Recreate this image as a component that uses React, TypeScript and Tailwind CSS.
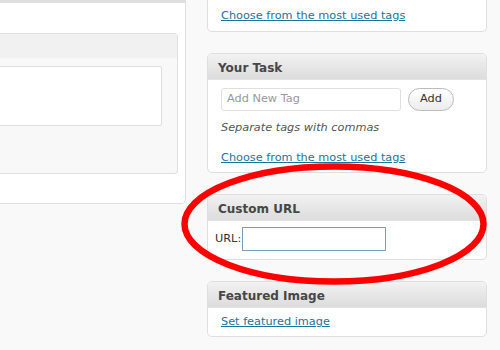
const font = { fontFamily: '"DejaVu Sans", Verdana, sans-serif' }

function Box({ title, children, className = "" }: { title: string; children: React.ReactNode; className?: string }) {
  return (
    <div className={"rounded-[5px] border border-[#dfdfdf] bg-white overflow-hidden " + className}>
      <div className="h-[26px] border-b border-[#e3e3e3] bg-linear-to-b from-[#f2f2f2] to-[#dcdcdc] pl-[10px] pt-[5px] text-[12px] font-bold text-[#464646]">
        {title}
      </div>
      {children}
    </div>
  )
}

export default function App() {
  return (
    <div className="relative h-[350px] w-[500px] overflow-hidden bg-[#f9f9f9]" style={font}>
      <div className="flex gap-[21px]">
        {/* left editor column */}
        <div className="h-[204px] w-[186px] rounded-br-[5px] border-r border-b border-[#dfdfdf] bg-white">
          <div className="h-[3px] bg-[#dfdfdf]" />
          <div className="mt-[30px] h-[141px] w-[178px] rounded-r-[4px] border border-l-0 border-[#dfdfdf] bg-[#f8f8f8]">
            <div className="h-[24px] bg-[#f1f1f1]" />
            <div className="mt-[8px] h-[60px] w-[162px] rounded-r-[3px] border border-l-0 border-[#dfdfdf] bg-white" />
          </div>
        </div>

        {/* sidebar */}
        <div className="flex w-[280px] flex-col gap-[21px] text-[11.3px] text-[#333]">
          <div className="h-[32px] rounded-b-[5px] border border-t-0 border-[#dfdfdf] bg-white pl-[13px] pt-[8px]">
            <a className="text-[#21759b] underline">Choose from the most used tags</a>
          </div>

          <Box title="Your Task" className="h-[120px]">
            <div className="px-[13px] pt-[8px]">
              <div className="flex items-center gap-[7px]">
                <div className="flex h-[23px] w-[180px] items-center rounded-[3px] border border-[#dfdfdf] pl-[5px] text-[#999]">
                  Add New Tag
                </div>
                <button className="h-[23px] w-[46px] rounded-full border border-[#bbb] bg-linear-to-b from-white to-[#ececec] text-[#333]">
                  Add
                </button>
              </div>
              <div className="mt-[9px] italic text-[#555]">Separate tags with commas</div>
              <div className="mt-[13px]">
                <a className="text-[#21759b] underline">Choose from the most used tags</a>
              </div>
            </div>
          </Box>

          <Box title="Custom URL" className="h-[66px]">
            <div className="flex items-center pl-[7px] pt-[6px]">
              <span>URL:</span>
              <div className="ml-[1px] h-[24px] w-[144px] border border-[#7f9db9] bg-white" />
            </div>
          </Box>

          <Box title="Featured Image" className="h-[56px]">
            <div className="pl-[13px] pt-[6px]">
              <a className="text-[#21759b] underline">Set featured image</a>
            </div>
          </Box>
        </div>
      </div>

      <svg className="pointer-events-none absolute inset-0" width="500" height="350">
        <ellipse cx="334" cy="224" rx="149.5" ry="57.5" fill="none" stroke="#ff0000" strokeWidth="6.5" />
      </svg>
    </div>
  )
}
